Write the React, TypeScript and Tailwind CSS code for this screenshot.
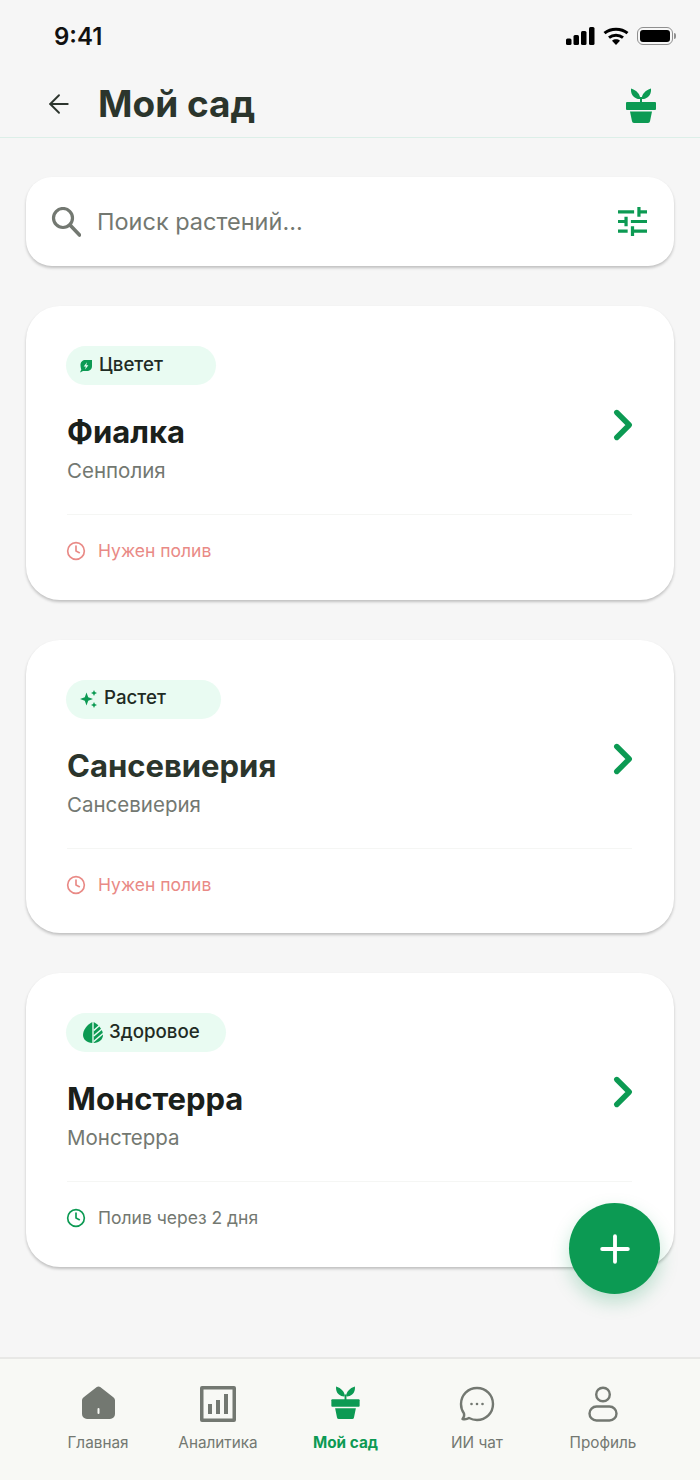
import { ArrowLeft, ChevronRight, Clock, Plus } from "lucide-react";
import type { ReactNode } from "react";

function PotIcon({ className }: { className?: string }) {
  return (
    <svg viewBox="0 0 30 35" className={className} fill="currentColor">
      <path d="M5 .5C4.700 4 5.500 7 8 9c1.800 1.500 4.200 2.300 6.200 2C14.500 6.500 10.500 2 5 .5z" />
      <path d="M25 .5c.3 3.500-.5 6.500-3 8.500-1.800 1.500-4.200 2.300-6.200 2C15.500 6.500 19.500 2 25 .5z" />
      <rect x="14" y="9" width="2" height="6" />
      <path d="M1 14h28a1 1 0 0 1 1 1v6a1 1 0 0 1-1 1H1a1 1 0 0 1-1-1v-6a1 1 0 0 1 1-1z" />
      <path d="M4 23.500h22l-2 9.800a2 2 0 0 1-2 1.700H8a2 2 0 0 1-2-1.700z" />
    </svg>
  );
}

function BloomIcon() {
  return (
    <svg viewBox="0 0 14 14" className="h-[14px] w-[14px] text-[#0c9a53]" fill="currentColor">
      <path d="M1.500 6C1.500 3 3.500 1 6.500 1h6.500v6c0 3.200-2.200 5-5.200 5H4l-3 1.500L2.300 10.500C1.800 9.300 1.500 7.500 1.500 6z" />
      <path d="M8 3.200 4.700 7.400h2.100l-.7 3.200 3.300-4.300H7.300z" fill="#e9fbf2" />
    </svg>
  );
}

function SparkIcon() {
  return (
    <svg viewBox="0 0 18 18" className="h-[18px] w-[18px] text-[#0c9a53]" fill="currentColor">
      <path d="M6.500 2.500 8.200 7.300 13 9l-4.800 1.700-1.700 4.800-1.700-4.800L0 9l4.800-1.700z" />
      <path d="M14 0l.9 2.100L17 3l-2.100.9L14 6l-.9-2.100L11 3l2.100-.9z" />
      <path d="M14 12l.9 2.100L17 15l-2.100.9L14 18l-.9-2.100L11 15l2.100-.9z" />
    </svg>
  );
}

function LeafIcon() {
  return (
    <svg viewBox="0 0 20 21" className="h-[21px] w-[20px] text-[#0c9a53]" fill="currentColor">
      <path d="M9.300 0C4 3 0 8 0 13c0 4.500 3.800 7.700 9.300 8z" />
      <path d="M10.700 0C16 3 20 8 20 13c0 4.500-3.800 7.700-9.300 8z" />
      <path d="M10.700 8.500 17 3M10.700 14 20 6M10.700 19.500 20 11.500" stroke="#e9fbf2" strokeWidth="1.500" fill="none" />
    </svg>
  );
}

type Plant = {
  status: string;
  icon: ReactNode;
  chip: string;
  name: string;
  nameColor: string;
  latin: string;
  water: string;
  urgent: boolean;
};

const plants: Plant[] = [
  { status: "Цветет", icon: <BloomIcon />, chip: "w-[150px] pl-[13px]", name: "Фиалка", nameColor: "text-[#1a201b]", latin: "Сенполия", water: "Нужен полив", urgent: true },
  { status: "Растет", icon: <SparkIcon />, chip: "w-[155px] pl-[14px]", name: "Сансевиерия", nameColor: "text-[#2b352c]", latin: "Сансевиерия", water: "Нужен полив", urgent: true },
  { status: "Здоровое", icon: <LeafIcon />, chip: "w-[160px] pl-[17px]", name: "Монстерра", nameColor: "text-[#1a201b]", latin: "Монстерра", water: "Полив через 2 дня", urgent: false },
];

function PlantCard({ plant }: { plant: Plant }) {
  return (
    <div className="h-[293.500px] rounded-[34px] bg-white px-[40px] pt-[40px] shadow-[0_2px_3px_rgba(0,0,0,0.22)]">
      <div className={`flex h-[39px] items-center gap-[6px] rounded-full bg-[#e9fbf2] ${plant.chip}`}>
        {plant.icon}
        <span className="pb-px text-[18.700px] font-medium text-[#1f2b24]">{plant.status}</span>
      </div>
      <div className="mt-[26px] flex items-start justify-between">
        <div className="pl-[1px]">
          <h2 className={`text-[31px] font-bold leading-[42px] ${plant.nameColor}`}>{plant.name}</h2>
          <p className="text-[20.500px] leading-[35px] text-[#737871]">{plant.latin}</p>
        </div>
        <ChevronRight className="mr-[-14px] mt-[-11px] h-[50px] w-[50px] text-[#0c9a53]" strokeWidth={2.600} />
      </div>
      <div className="ml-[1px] mr-[2px] mt-[26px] h-px bg-[#f5f6f4]" />
      <div className={`mt-[23px] flex items-center gap-[12px] text-[17.500px] ${plant.urgent ? "text-[#e98a86]" : "text-[#737871]"}`}>
        <Clock className={`h-[20px] w-[20px] ${plant.urgent ? "" : "text-[#0c9a53]"}`} strokeWidth={2} />
        <span>{plant.water}</span>
      </div>
    </div>
  );
}

const nav = [
  { label: "Главная", box: "w-[58px]", icon: (
    <svg viewBox="0 0 33 33" className="h-[33px] w-[33px] text-[#737871]" fill="currentColor">
      <path d="M16.500 0.500c.6 0 1.200.2 1.700.6L31 11c1.200.9 2 2 2 3.500V28a5 5 0 0 1-5 5H5a5 5 0 0 1-5-5V14.500C0 13 .8 11.900 2 11L14.800 1.100c.5-.4 1.100-.6 1.700-.6z" />
      <rect x="15.500" y="22" width="2" height="6" rx="1" fill="#f8f9f5" />
    </svg>
  ) },
  { label: "Аналитика", box: "ml-[51px] w-[80px]", icon: (
    <svg viewBox="0 0 36 36" className="h-[36px] w-[36px] text-[#737871]" fill="currentColor">
      <path fillRule="evenodd" d="M2 0h32a2 2 0 0 1 2 2v32a2 2 0 0 1-2 2H2a2 2 0 0 1-2-2V2a2 2 0 0 1 2-2zm1.500 3.500v29h29v-29z" />
      <rect x="8" y="18" width="4" height="10" />
      <rect x="16" y="14" width="4" height="14" />
      <rect x="24" y="8" width="4" height="20" />
    </svg>
  ) },
  { label: "Мой сад", box: "ml-[55px] w-[65px]", active: true, icon: <PotIcon className="h-[33px] w-[29px] text-[#0c9a53]" /> },
  { label: "ИИ чат", box: "ml-[73px] w-[52px]", icon: (
    <svg viewBox="0 0 36 36" className="h-[36px] w-[36px] text-[#737871]" fill="none" stroke="currentColor" strokeWidth="2.400" strokeLinejoin="round">
      <path d="M18 2c9 0 16 7 16 16s-7 16-16 16c-3 0-5.500-.7-8-2-2 1.300-4 1.500-6.500 1 1.500-1.700 2-3.500 1.500-5.500C3 24.800 2 21.500 2 18 2 9 9 2 18 2z" />
      <circle cx="12.500" cy="18" r="1.300" fill="currentColor" stroke="none" />
      <circle cx="18" cy="18" r="1.300" fill="currentColor" stroke="none" />
      <circle cx="23.500" cy="18" r="1.300" fill="currentColor" stroke="none" />
    </svg>
  ) },
  { label: "Профиль", box: "ml-[66px] w-[68px]", icon: (
    <svg viewBox="0 0 30 36" className="h-[36px] w-[30px] text-[#737871]" fill="none" stroke="currentColor" strokeWidth="2.400">
      <circle cx="15" cy="8.500" r="6.800" />
      <rect x="1.500" y="20.500" width="27" height="14" rx="7" />
    </svg>
  ) },
];

export default function App() {
  return (
    <div className="relative flex h-[1480px] w-[700px] flex-col overflow-hidden bg-[#f6f6f6] font-['Inter',sans-serif]">
      {/* Status bar */}
      <div className="flex h-[68px] items-start justify-between pl-[54px] pr-[24px] pt-[22px]">
        <span className="text-[24px] font-semibold leading-[30px] text-[#111]">9:41</span>
        <div className="flex items-center gap-[8px] pt-[5px]">
          <svg viewBox="0 0 29 18" className="h-[18px] w-[29px]" fill="#000">
            <rect x="0" y="11.500" width="5.500" height="6.500" rx="1.500" />
            <rect x="7.500" y="8" width="5.500" height="10" rx="1.500" />
            <rect x="15" y="4" width="5.500" height="14" rx="1.500" />
            <rect x="23" y="0" width="5.500" height="18" rx="1.500" />
          </svg>
          <svg viewBox="0 0 26 18" className="h-[18px] w-[26px]" fill="none" stroke="#000" strokeWidth="3">
            <path d="M1.500 6.200C7.800.8 18.200.8 24.500 6.200" />
            <path d="M6 10.700c4-3.300 10-3.300 14 0" />
            <path d="M13 18l-4-4.300c2.300-1.800 5.700-1.800 8 0z" fill="#000" stroke="none" />
          </svg>
          <div className="flex items-center">
            <div className="h-[18px] w-[36px] rounded-[6px] border border-[#8f8f8f] p-[2px]">
              <div className="h-full w-full rounded-[3px] bg-black" />
            </div>
            <div className="ml-[1px] h-[6px] w-[2px] rounded-r-full bg-[#8f8f8f]" />
          </div>
        </div>
      </div>

      {/* Header */}
      <header className="flex h-[70px] items-center justify-between border-b border-[#dcefe8] pl-[44px] pr-[44px] pt-[2px]">
        <div className="flex items-center gap-[24px]">
          <ArrowLeft className="h-[30px] w-[30px] text-[#2d352e]" strokeWidth={1.500} />
          <h1 className="text-[37px] font-bold text-[#2b352c]">Мой сад</h1>
        </div>
        <PotIcon className="mt-[3px] h-[35px] w-[30px] text-[#0c9a53]" />
      </header>

      {/* Content */}
      <main className="flex flex-1 flex-col gap-[40px] px-[26px] pt-[39px]">
        <div className="flex h-[89px] items-center justify-between rounded-[26px] bg-white pl-[25px] pr-[27px] shadow-[0_2px_3px_rgba(0,0,0,0.22)]">
          <div className="flex items-center gap-[16px]">
            <svg viewBox="0 0 30 30" className="h-[30px] w-[30px] text-[#737871]" fill="none" stroke="currentColor">
              <circle cx="12" cy="11" r="9.500" strokeWidth="3.200" />
              <path d="M19 18l9.500 10" strokeWidth="3.600" strokeLinecap="round" />
            </svg>
            <span className="text-[23.500px] text-[#737871]">Поиск растений...</span>
          </div>
          <svg viewBox="3 3 18 18" className="h-[29px] w-[29px] text-[#0c9a53]" fill="currentColor">
            <path d="M3 17v2h6v-2H3zM3 5v2h10V5H3zm10 16v-2h8v-2h-8v-2h-2v6h2zM7 9v2H3v2h4v2h2V9H7zm14 4v-2H11v2h10zm-6-4h2V7h4V5h-4V3h-2v6z" />
          </svg>
        </div>
        {plants.map((plant) => (
          <PlantCard key={plant.name} plant={plant} />
        ))}
      </main>

      {/* Add button */}
      <button className="absolute left-[569px] top-[1203px] flex h-[91px] w-[91px] items-center justify-center rounded-full bg-[#0c9a53] shadow-[0_8px_18px_rgba(15,157,88,0.25)]">
        <Plus className="h-[44px] w-[44px] text-white" strokeWidth={2.100} />
      </button>

      {/* Bottom nav */}
      <nav className="flex h-[123px] border-t-2 border-[#e8e8e6] bg-[#f8f9f5] pl-[69px] pt-[27px]">
        {nav.map((item) => (
          <div key={item.label} className={`flex flex-col items-center ${item.box}`}>
            <div className="flex h-[36px] items-start">{item.icon}</div>
            <span className={`mt-[10px] whitespace-nowrap text-[15.300px] ${item.active ? "font-bold text-[#0c9a53]" : "text-[#737871]"}`}>
              {item.label}
            </span>
          </div>
        ))}
      </nav>
    </div>
  );
}
